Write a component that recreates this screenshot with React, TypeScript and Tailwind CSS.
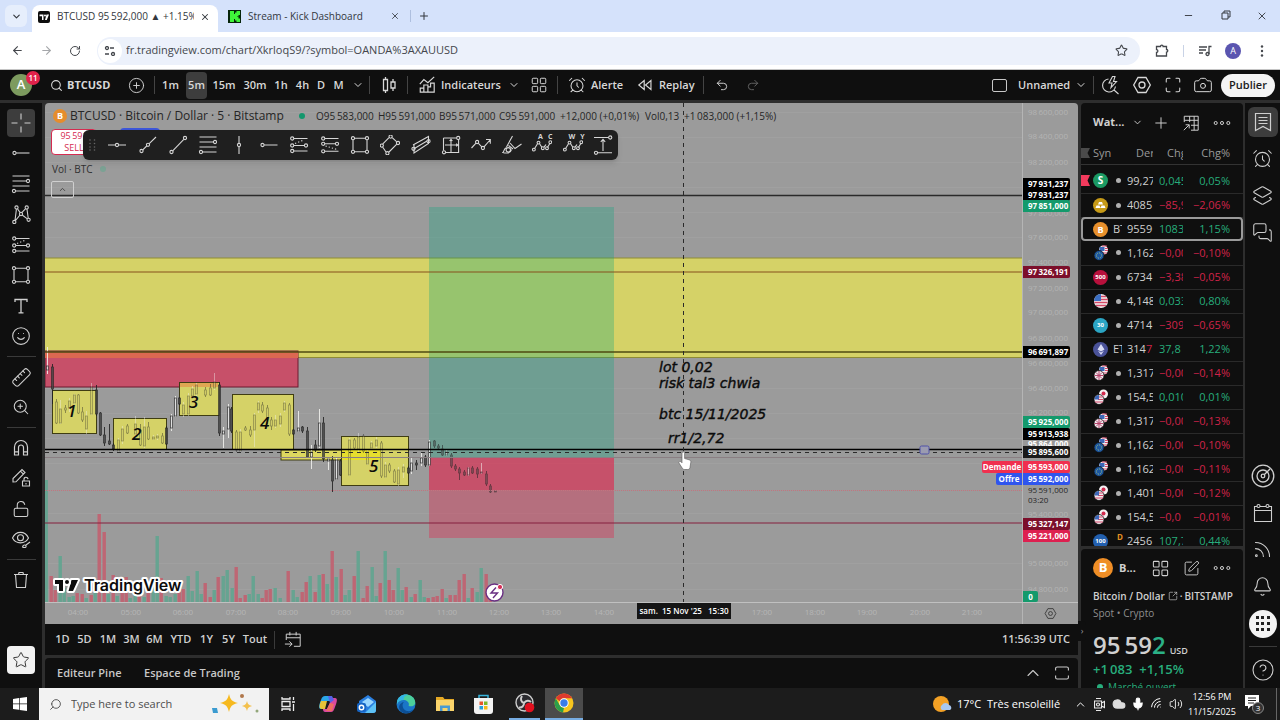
import React from "react";
import {
  AlarmClock,
  ArrowLeft,
  ArrowRight,
  Bell,
  Camera,
  ChevronDown,
  ChevronUp,
  CircleHelp,
  CirclePlus,
  Cloud,
  Layers2,
  LockOpen,
  Maximize,
  MessagesSquare,
  Mic,
  Minus,
  Plus,
  Redo2,
  RotateCw,
  Rss,
  Ruler,
  Search,
  Smile,
  SquareArrowOutUpRight,
  SquarePen,
  Star,
  Undo2,
  Volume2,
  Wifi,
  X,
  ZoomIn,
} from "lucide-react";

type Kids = { children: React.ReactNode };

/* ---------- line icons on a 20 unit grid ---------- */

function Glyph({ children, size = 20 }: Kids & { size?: number }) {
  return (
    <svg width={size} height={size} viewBox="0 0 20 20" fill="none" stroke="currentColor" strokeWidth="1.1" aria-hidden="true" className="shrink-0">
      {children}
    </svg>
  );
}

function Dots({ at, r = 1.6 }: { at: number[][]; r?: number }) {
  return (
    <>
      {at.map(([x, y]) => (
        <circle key={`${x}-${y}`} cx={x} cy={y} r={r} />
      ))}
    </>
  );
}

const CrossIcon = () => (
  <Glyph><path d="M10 .5v6M10 13.5v6M.5 10h6M13.5 10h6" /></Glyph>
);
const HLineIcon = () => (
  <Glyph><path d="M1 10h7.3M11.7 10H19" /><Dots at={[[10, 10]]} /></Glyph>
);
const RayIcon = () => (
  <Glyph><path d="M5.2 10H18.5" /><Dots at={[[3.5, 10]]} /></Glyph>
);
const VLineIcon = () => (
  <Glyph><path d="M10 1v7.3M10 11.7V19" /><Dots at={[[10, 10]]} /></Glyph>
);
const ExtendIcon = () => (
  <Glyph><path d="M4.8 14.8 8.7 11M11.2 8.6 18 2" /><Dots at={[[3.5, 16], [10, 9.8]]} /></Glyph>
);
const TrendIcon = () => (
  <Glyph><path d="M4.7 15.8 15.8 4.3" /><Dots at={[[3.5, 17], [17, 3]]} /></Glyph>
);
const FibIcon = () => (
  <Glyph><path d="M1.5 2H18.5M1.5 7H15.2M1.5 12H18.5M4.7 17H18.5" /><Dots at={[[17, 7], [3, 17]]} /></Glyph>
);
const PatternIcon = () => (
  <Glyph>
    <path d="M4 16.5 5.4 5.2M6.6 5 9 8.4M11 8.3 14.4 4.8M16 5.2 17.2 14M4.2 16.8 9 11M11.2 11 16 14.6" />
    <Dots at={[[5.5, 3.5], [15.7, 3.5], [10, 10], [3.3, 18], [17.6, 15.8]]} />
  </Glyph>
);
const ForecastIcon = () => (
  <Glyph>
    <path d="M4.8 3.5H18.5M4.8 10.5H15.3M4.8 16H18.5" />
    <path d="M6 8.5 15 5" strokeDasharray="1.3 2" />
    <Dots at={[[3.2, 3.5], [3.2, 10.5], [17, 10.5], [3.2, 16]]} />
  </Glyph>
);
const ShortIcon = () => (
  <Glyph>
    <path d="M4.8 3.5H18.5M4.8 8.8H15.3M4.8 16.3H18.5" />
    <path d="M5.5 11 17 14.5" strokeDasharray="1.3 2" />
    <Dots at={[[3.2, 3.5], [3.2, 8.8], [17, 8.8], [3.2, 16.3]]} />
  </Glyph>
);
const RectIcon = () => (
  <Glyph>
    <path d="M4.6 3.2H15.4M4.6 16.8H15.4M3 4.8V15.2M17 4.8V15.2" />
    <Dots at={[[3, 3.2], [17, 3.2], [3, 16.8], [17, 16.8]]} />
  </Glyph>
);
const RotatedIcon = () => (
  <Glyph>
    <path d="M2.6 9.2 9 2.6M12.2 2.6 16.8 6.8M16.8 9.2 9 17M6 17 2.6 12" />
    <Dots at={[[1.8, 10.6], [10.6, 1.6], [7.4, 18.2], [18, 8]]} />
  </Glyph>
);
const ChannelIcon = () => (
  <Glyph>
    <path d="M2 10 17.5 1.5V8.5L3 18V10M3.4 13.5 16 6" />
    <Dots at={[[2.5, 13.8], [17.5, 6.2]]} />
  </Glyph>
);
const RangeIcon = () => (
  <Glyph>
    <path d="M2.5 3H15.4M2.5 3V15.4M4.5 17.5H17.6V4.6M10 4V17M4 10H17M8.6 6 10 4.4 11.4 6M15.2 8.6 16.8 10 15.2 11.4" />
    <Dots at={[[17.2, 3], [3, 17.3]]} />
  </Glyph>
);
const PathIcon = () => (
  <Glyph>
    <path d="M.5 13 5 8.2M7.2 8.2 10.8 11.8M13 11.8 19 5M15 4.5H19.3V8.8" />
    <Dots at={[[6.1, 7], [11.9, 13]]} />
  </Glyph>
);
const BrushIcon = () => (
  <Glyph>
    <path d="M10.5 1 4.5 12M8 8 13 13.5 19.5 9M4.5 12.5C1 14 2.5 17 .8 17.5 4 18.5 8.5 18.5 9.5 14.5M6.5 10.5 11 14" />
    <circle cx="6.3" cy="14.8" r="2.2" />
  </Glyph>
);
const AbcIcon = () => (
  <Glyph>
    <path d="M2.6 13.5 5.5 8.8M7.6 8.8 9.8 12.2M12 12.2 14 9.5M15.4 12.5 18 8.2" />
    <Dots at={[[1.9, 14.6], [6.5, 7.6], [10.8, 13.2], [15, 13.2], [18.3, 7.2]]} r={1.4} />
  </Glyph>
);
const MeasureIcon = () => (
  <Glyph>
    <path d="M1 2.5H15.5M4.7 17.8H19M10 4.5V16M7.8 6.8 10 4.4 12.2 6.8" />
    <Dots at={[[17.2, 2.5], [3, 17.8]]} />
  </Glyph>
);
const TextIcon = () => (
  <Glyph><path d="M4 6V3.5H16V6M10 3.5V16.8M7.5 16.8H12.5" strokeWidth="1.3" /></Glyph>
);
const MagnetIcon = () => (
  <Glyph><path d="M3.5 17V9a6.5 6.5 0 0 1 13 0v8h-4V9.5a2.5 2.5 0 0 0-5 0V17zM3.5 13.8h4M12.5 13.8h4" strokeWidth="1.2" /></Glyph>
);
const CandlesIcon = () => (
  <Glyph><path d="M4.5 4.5h4v11h-4zM12 7h4v6h-4zM6.5 2v2.5M6.5 15.5V18M14 4v3M14 13v3" strokeWidth="1.3" /></Glyph>
);
const IndicatorsIcon = () => (
  <Glyph size={18}><path d="M2 9 6.5 4l4.5 3.5L18 1M2.5 18v-4.5h4V18zM6.5 18V10h4.5v8zM11 12h3V8h4v10h-7" strokeWidth="1.3" /></Glyph>
);
const GridIcon = ({ size = 18 }: { size?: number }) => (
  <Glyph size={size}>
    <rect x="2.5" y="2.5" width="6" height="6" rx="1" /><rect x="11.5" y="2.5" width="6" height="6" rx="1" />
    <rect x="2.5" y="11.5" width="6" height="6" rx="1" /><rect x="11.5" y="11.5" width="6" height="6" rx="1" />
  </Glyph>
);
const RewindIcon = () => (
  <Glyph size={18}><path d="M8 5v10L2 10zM15.5 5v10l-6-5z" strokeWidth="1.3" /></Glyph>
);
const HexIcon = ({ size = 20 }: { size?: number }) => (
  <Glyph size={size}><path d="M6 2.5h8l4.3 7.5-4.3 7.5H6L1.7 10z" strokeWidth="1.3" /><circle cx="10" cy="10" r="3" strokeWidth="1.3" /></Glyph>
);
const QuickSearchIcon = () => (
  <Glyph>
    <path d="M8.5 4A6.5 6.5 0 1 0 15.5 11.5M14 15 18.5 19M12.5 1.5 9 8H12L11 12.5 16.5 6.5H13.5L15 1.5z" strokeWidth="1.1" />
  </Glyph>
);
const PencilLockIcon = () => (
  <Glyph>
    <path d="M2 14V10.5L11 1.5 14 4.5 5 13.8zM9.4 3.2 12.4 6.2" />
    <path d="M11.5 13h7v5h-7zM13 13v-1.5a2 2 0 0 1 4-.4M15 15v1.5" />
  </Glyph>
);
const EyeIcon = () => (
  <Glyph>
    <path d="M1.5 9C5 1.5 14 1.5 17.5 9 14 15.5 5 15.5 1.5 9z" /><circle cx="9.5" cy="8.7" r="3" />
    <path d="M11.5 18c.5-2.5 3-2.5 3.5-1s-1.5 2-3.5 1zM15 16l4-3" />
  </Glyph>
);
const TrashIcon = () => (
  <Glyph><path d="M3 4.5H17M7.5 4.5 8 2.5H12L12.5 4.5M4.5 4.5 5.5 17.5H14.5L15.5 4.5" /></Glyph>
);
const TableAddIcon = () => (
  <Glyph size={18}>
    <path d="M2.5 9V2.5H18V18H10M2.5 7H18M8.5 2.5V9M13.5 2.5V18M10 12.5H18M2 18 8 12M4 12H8V16" />
  </Glyph>
);
const MoreIcon = () => (
  <Glyph size={18}><Dots at={[[3, 10], [10, 10], [17, 10]]} r={1.7} /></Glyph>
);
const ListIcon = () => (
  <Glyph><path d="M2.5 1.5H17.5V18.5L10 14.5 2.5 18.5zM5.5 5.5H14.5M5.5 8.5H14.5M5.5 11.5H14.5" strokeWidth="1.2" /></Glyph>
);
const RadarIcon = () => (
  <Glyph size={24}><circle cx="10" cy="10" r="9" /><circle cx="10" cy="10" r="5" /><circle cx="10" cy="10" r="1.5" /><path d="M11 9 16 4" /></Glyph>
);
const CalIcon = () => (
  <Glyph><path d="M4 3.5H1.5V18.5H18.5V3.5H16M7 3.5H13M1.5 7.5H18.5" /><Dots at={[[5.5, 3], [14.5, 3]]} r={1.5} /></Glyph>
);
const GoToIcon = () => (
  <Glyph size={18}><path d="M2.5 10V3.5H18V17H11M2.5 7.5H18M6.5 1V5M13.5 1V5M1 14.5H9M6 11.5 9 14.5 6 17.5" /></Glyph>
);
const ExpandIcon = () => (
  <Glyph size={16}><path d="M2 7V4.5a2 2 0 0 1 2-2H16a2 2 0 0 1 2 2V7M2 13v2.5a2 2 0 0 0 2 2H16a2 2 0 0 0 2-2V13" strokeWidth="1.4" /></Glyph>
);

/* ---------- browser chrome ---------- */

function TvMark() {
  return (
    <svg width="12" height="12" viewBox="0 0 12 12" aria-hidden="true" className="shrink-0">
      <rect width="12" height="12" rx="2" fill="#0d0d0d" />
      <path d="M1.5 3.5h4V9H4V5.2H1.5zM8.500 3.500H11L8.800 9H7z" fill="#fff" /><circle cx="7" cy="4.5" r="1" fill="#fff" />
    </svg>
  );
}

function BrowserTabs() {
  return (
    <div className="flex h-8 shrink-0 items-center bg-[#d5e2fb] text-[10px] text-[#33373d]">
      <button aria-label="Rechercher dans les onglets" className="ml-[5px] flex h-[22px] w-[22px] items-center justify-center rounded-md bg-[#e6eefc]">
        <ChevronDown size={11} strokeWidth={2.5} />
      </button>
      <div className="ml-[5px] mt-[5px] flex h-[27px] w-[186px] items-center rounded-t-lg bg-white pb-[4px] pl-[6px] pr-2">
        <TvMark />
        <span className="ml-[7px] w-[137px] overflow-hidden whitespace-nowrap">BTCUSD 95{"\u2009"}592,000 ▲ +1.15% U</span>
        <button aria-label="Fermer l'onglet" className="ml-auto"><X size={10} strokeWidth={2.5} /></button>
      </div>
      <div className="flex h-full w-[191px] items-center pl-[10px] pr-[9px]">
        <svg width="13" height="13" viewBox="0 0 13 13" aria-hidden="true">
          <rect width="13" height="13" fill="#06240a" /><path d="M2 1h4v3h1V2.500h1.500V1H12v4h-1.500v1.500H9V7h1.500v1.500H12V12H8.500v-1.500H7V9H6v3H2z" fill="#3ff43a" />
        </svg>
        <span className="ml-[7px]">Stream - Kick Dashboard</span>
        <button aria-label="Fermer l'onglet" className="ml-auto"><X size={10} strokeWidth={2} /></button>
      </div>
      <button aria-label="Nouvel onglet" className="ml-[1px] flex w-[26px] justify-center border-l border-[#aebfdf]"><Plus size={12} strokeWidth={2} /></button>
      <div className="ml-auto flex">
        <button aria-label="Réduire" className="flex w-[37px] justify-center"><Minus size={11} strokeWidth={2} /></button>
        <button aria-label="Restaurer" className="flex w-[37px] justify-center">
          <svg width="10" height="10" viewBox="0 0 10 10" fill="none" stroke="currentColor"><path d="M1 3h6v6H1zM3 3V1h6v6H7" /></svg>
        </button>
        <button aria-label="Fermer" className="flex w-[36px] justify-center"><X size={12} strokeWidth={1.8} /></button>
      </div>
    </div>
  );
}

function AddressBar() {
  return (
    <div className="flex h-[38px] shrink-0 items-center border-b border-[#c4c4c4] bg-white text-[#44474c]">
      <button aria-label="Retour" className="ml-[3px] flex w-[29px] justify-center"><ArrowLeft size={13} /></button>
      <button aria-label="Avancer" className="flex w-[28px] justify-center text-[#a5a7aa]"><ArrowRight size={13} /></button>
      <button aria-label="Actualiser" className="flex w-[30px] justify-center"><RotateCw size={12} /></button>
      <div className="ml-[7px] flex h-[28px] flex-1 items-center rounded-full bg-[#ecf1fb] pl-[1px] pr-[12px]">
        <span className="flex h-[24px] w-[24px] items-center justify-center rounded-full bg-white">
          <svg width="12" height="10" viewBox="0 0 12 10" fill="none" stroke="currentColor" strokeWidth="1.3" aria-hidden="true"><circle cx="3" cy="2" r="1.500" /><path d="M6 2h4M1 8h4" /><circle cx="9" cy="8" r="1.500" /></svg>
        </span>
        <input aria-label="Adresse" defaultValue="fr.tradingview.com/chart/XkrloqS9/?symbol=OANDA%3AXAUUSD" className="ml-[4px] flex-1 bg-transparent text-[11px] outline-none" />
        <button aria-label="Favori"><Star size={13} /></button>
      </div>
      <button aria-label="Extensions" className="ml-[14px] flex w-[16px] justify-center">
        <svg width="14" height="13" viewBox="0 0 14 13" fill="none" stroke="currentColor" strokeWidth="1.3" aria-hidden="true"><path d="M1.500 2.500H5.500a1.300 1.300 0 0 1 2.600 0H11.500V5.500a1.300 1.300 0 0 1 0 2.600V12H1.500V8.500a1.400 1.400 0 0 0 0-2.800z" /></svg>
      </button>
      <span className="ml-[13px] h-3 w-px bg-[#c9d3e6]" />
      <button aria-label="Multimédia" className="ml-[14px]">
        <svg width="14" height="12" viewBox="0 0 14 12" fill="none" stroke="currentColor" strokeWidth="1.3"><path d="M1 2h8M1 5h7M1 8h4M11 9V1.500h2.500" /><circle cx="9.500" cy="9" r="1.500" /></svg>
      </button>
      <span className="ml-[13px] flex h-4 w-4 items-center justify-center rounded-full bg-[#5a55b0] text-[9px] text-white">A</span>
      <button aria-label="Menu" className="ml-[12px] mr-[10px] flex w-[17px] justify-center">
        <svg width="4" height="12" viewBox="0 0 4 12" fill="currentColor"><circle cx="2" cy="1.500" r="1.200" /><circle cx="2" cy="6" r="1.200" /><circle cx="2" cy="10.500" r="1.200" /></svg>
      </button>
    </div>
  );
}

/* ---------- application header ---------- */

const Sep = () => <span className="h-[18px] w-px shrink-0 bg-[#444]" />;

function Tool({ label, width, children }: Kids & { label: string; width: string }) {
  return (
    <button aria-label={label} className={`flex shrink-0 items-center justify-center ${width}`}>
      {children}
    </button>
  );
}

const INTERVALS: [string, string][] = [
  ["1m", "w-[31px]"], ["5m", "w-[21px] h-[27px] rounded bg-[#3d3d3d]"], ["15m", "w-[34px]"], ["30m", "w-[28px]"],
  ["1h", "w-[24px]"], ["4h", "w-[19px]"], ["D", "w-[18px]"], ["M", "w-[17px]"],
];

function Header() {
  return (
    <header className="flex h-[30px] shrink-0 items-center bg-[#0f0f0f] text-[11px] font-semibold text-[#d8d8d8]">
      <div className="relative flex w-[42px] shrink-0 justify-center">
        <span className="flex h-[22px] w-[22px] items-center justify-center rounded-full bg-[#7d9b5f] text-[13px] text-white">A</span>
        <span className="absolute -top-[3px] left-[26px] flex h-[14px] w-[14px] items-center justify-center rounded-full bg-[#e0224a] text-[8px] text-white">11</span>
      </div>
      <button className="ml-2 flex w-[68px] shrink-0 items-center gap-[4px]"><Search size={13} strokeWidth={2} /><span className="font-bold">BTCUSD</span></button>
      <Tool label="Comparer" width="w-[36px]"><CirclePlus size={17} strokeWidth={1.3} /></Tool>
      <Sep />
      {INTERVALS.map(([t, w]) => (
        <button key={t} className={`shrink-0 text-center ${w}`}>{t}</button>
      ))}
      <Tool label="Intervalles" width="w-[22px]"><ChevronDown size={12} strokeWidth={2} /></Tool>
      <Sep />
      <Tool label="Bougies" width="w-[37px]"><CandlesIcon /></Tool>
      <Sep />
      <button className="ml-[10px] flex w-[82px] shrink-0 items-center gap-[5px]"><IndicatorsIcon />Indicateurs</button>
      <Tool label="Modèles" width="w-[28px]"><ChevronDown size={12} strokeWidth={2} /></Tool>
      <Tool label="Dispositions" width="w-[22px]"><GridIcon /></Tool>
      <span className="w-[7px]" />
      <Sep />
      <button className="ml-[10px] flex w-[69px] shrink-0 items-center gap-[5px]"><AlarmClock size={18} strokeWidth={1.4} />Alerte</button>
      <button className="flex w-[66px] shrink-0 items-center gap-[4px]"><RewindIcon />Replay</button>
      <Sep />
      <Tool label="Annuler" width="w-[36px]"><Undo2 size={14} strokeWidth={1.6} /></Tool>
      <Tool label="Rétablir" width="w-[26px]"><Redo2 size={14} strokeWidth={1.6} className="text-[#666]" /></Tool>
      <div className="ml-auto flex items-center">
        <Tool label="Configuration" width="w-[28px]"><span className="h-[13px] w-[15px] rounded-xs border border-[#c8c8c8]" /></Tool>
        <button className="ml-[5px] w-[51px] text-left">Unnamed</button>
        <Tool label="Gérer" width="w-[24px]"><ChevronDown size={12} strokeWidth={2} /></Tool>
        <Sep />
        <Tool label="Recherche rapide" width="w-[32px]"><QuickSearchIcon /></Tool>
        <Tool label="Réglages" width="w-[31px]"><HexIcon /></Tool>
        <Tool label="Plein écran" width="w-[31px]"><Maximize size={18} strokeWidth={1.4} /></Tool>
        <Tool label="Capture" width="w-[30px]"><Camera size={20} strokeWidth={1.2} /></Tool>
        <button className="ml-[3px] mr-[5px] h-[23px] w-[54px] rounded-full bg-[#f4f4f4] text-[#1a1a1a]">Publier</button>
      </div>
    </header>
  );
}

/* ---------- left drawing rail ---------- */

function RailButton({ label, active, children }: Kids & { label: string; active?: boolean }) {
  return (
    <button aria-label={label} className={`flex h-[28px] w-[28px] items-center justify-center rounded ${active ? "bg-[#3d3d3d]" : ""}`}>
      {children}
    </button>
  );
}

const RailRule = () => <span className="my-[6px] h-px w-[29px] bg-[#3a3a3a]" />;

function LeftRail() {
  return (
    <aside className="mr-[3px] flex w-[42px] shrink-0 flex-col items-center bg-[#0f0f0f] py-[6px] text-[#d0d0d0]">
      <div className="flex h-[241px] flex-col justify-between">
        <RailButton label="Croix" active><CrossIcon /></RailButton>
        <RailButton label="Lignes"><RayIcon /></RailButton>
        <RailButton label="Fibonacci"><FibIcon /></RailButton>
        <RailButton label="Motifs"><PatternIcon /></RailButton>
        <RailButton label="Prévision"><ForecastIcon /></RailButton>
        <RailButton label="Formes"><RectIcon /></RailButton>
        <RailButton label="Texte"><TextIcon /></RailButton>
        <RailButton label="Icônes"><Smile size={20} strokeWidth={1.3} /></RailButton>
      </div>
      <RailRule />
      <div className="flex h-[58px] flex-col justify-between">
        <RailButton label="Mesure"><Ruler size={21} strokeWidth={1.2} className="-scale-x-100" /></RailButton>
        <RailButton label="Zoom"><ZoomIn size={18} strokeWidth={1.4} /></RailButton>
      </div>
      <RailRule />
      <div className="flex h-[119px] flex-col justify-between">
        <RailButton label="Aimant"><MagnetIcon /></RailButton>
        <RailButton label="Mode dessin"><PencilLockIcon /></RailButton>
        <RailButton label="Verrouiller"><LockOpen size={18} strokeWidth={1.4} /></RailButton>
        <RailButton label="Masquer"><EyeIcon /></RailButton>
      </div>
      <RailRule />
      <RailButton label="Supprimer"><TrashIcon /></RailButton>
      <button aria-label="Barre de favoris" className="mb-[8px] mt-auto flex h-[28px] w-[28px] items-center justify-center rounded bg-[#f2f2f2] text-[#333]">
        <Star size={18} strokeWidth={1.3} />
      </button>
    </aside>
  );
}

/* ---------- chart ---------- */

// x, high, low, body top, body bottom, rising
type Candle = [number, number, number, number, number, boolean];
const CANDLES: Candle[] = [
  [47, 347, 374, 366, 370, true], [52, 364, 404, 367, 389, false], [56, 399, 424, 402, 423, false], [60, 400, 424, 409, 423, true],
  [65, 405, 413, 408, 410, false], [69, 398, 412, 401, 408, true], [74, 394, 404, 395, 403, true], [78, 394, 414, 395, 413, false],
  [82, 407, 422, 412, 420, false], [86, 411, 434, 416, 429, true], [91, 383, 415, 387, 414, true], [96, 385, 416, 390, 414, false],
  [100, 412, 436, 413, 435, false], [104, 427, 446, 435, 443, false], [109, 424, 445, 441, 444, false], [113, 443, 451, 445, 449, false],
  [118, 438, 452, 440, 451, true], [122, 426, 444, 429, 441, true], [127, 424, 434, 426, 433, false], [135, 416, 438, 424, 434, true],
  [140, 424, 446, 430, 445, false], [144, 417, 448, 427, 446, true], [148, 422, 440, 427, 439, false], [153, 435, 440, 437, 439, true],
  [157, 434, 440, 436, 438, true], [162, 433, 444, 436, 443, false], [166, 426, 445, 428, 444, false], [171, 414, 431, 416, 428, true],
  [175, 396, 417, 398, 416, true], [179, 397, 405, 398, 404, false], [183, 402, 417, 405, 414, true], [188, 393, 416, 396, 414, true],
  [192, 386, 398, 389, 396, true], [196, 383, 397, 385, 394, true], [205, 387, 397, 390, 395, false], [210, 384, 396, 388, 395, false],
  [214, 373, 390, 382, 388, true], [219, 382, 436, 385, 433, false], [223, 427, 448, 431, 434, true], [228, 404, 438, 407, 429, true],
  [231, 407, 433, 409, 431, false], [236, 430, 452, 432, 450, false], [240, 429, 453, 432, 451, true], [245, 426, 431, 428, 430, false],
  [250, 426, 437, 430, 435, false], [254, 413, 447, 415, 430, true], [258, 401, 413, 403, 410, true], [262, 402, 413, 405, 411, false],
  [267, 405, 424, 408, 418, false], [271, 417, 430, 420, 426, false], [275, 415, 428, 420, 426, true], [280, 413, 427, 416, 424, true],
  [284, 401, 412, 403, 410, true], [289, 403, 436, 405, 434, false], [293, 429, 435, 430, 434, false], [298, 411, 432, 428, 431, true],
  [302, 426, 433, 427, 431, false], [307, 427, 458, 431, 457, false], [311, 445, 469, 452, 457, true], [315, 440, 452, 445, 450, false],
  [319, 409, 448, 423, 446, true], [323, 417, 462, 423, 459, false], [328, 458, 470, 459, 461, true], [332, 456, 492, 460, 481, false],
  [336, 457, 480, 460, 479, true], [340, 459, 476, 461, 475, false], [349, 438, 476, 440, 475, true], [354, 438, 450, 440, 448, false],
  [358, 433, 453, 437, 449, true], [363, 434, 453, 436, 451, false], [367, 450, 465, 452, 464, true], [371, 441, 450, 443, 448, true],
  [376, 437, 448, 440, 446, true], [381, 441, 478, 443, 476, false], [385, 462, 478, 465, 477, true], [389, 463, 473, 465, 471, false],
  [394, 469, 483, 471, 482, false], [398, 467, 486, 470, 484, true], [403, 464, 478, 467, 472, true], [408, 466, 474, 468, 473, false],
  [411, 457, 474, 463, 471, true], [416, 460, 470, 463, 465, false], [421, 453, 466, 458, 463, true], [425, 455, 467, 457, 465, false],
  [429, 440, 466, 442, 465, true], [434, 440, 448, 441, 446, false], [438, 444, 450, 446, 448, false], [442, 445, 456, 449, 455, false],
  [446, 449, 456, 452, 455, true], [451, 453, 468, 455, 466, false], [455, 464, 471, 466, 469, false], [459, 467, 480, 469, 473, false],
  [464, 470, 476, 472, 475, false], [468, 467, 476, 468, 475, true], [472, 466, 474, 468, 473, false], [477, 467, 478, 469, 474, false],
  [481, 463, 474, 472, 473, true], [486, 471, 486, 474, 484, false], [490, 484, 493, 486, 492, false], [495, 490, 492, 491, 492, false],
];

// x, height, rising
const VOLUMES: [number, number, boolean][] = [
  [46, 122, true], [51, 26, false], [55, 12, false], [60, 46, true], [64, 14, true], [69, 5, true], [73, 6, true], [77, 9, false],
  [82, 8, false], [86, 4, true], [91, 7, false], [95, 14, true], [99, 88, false], [104, 70, false], [108, 8, true], [113, 27, false],
  [117, 6, true], [122, 9, false], [126, 25, false], [130, 4, true], [135, 8, true], [139, 7, false], [144, 5, true], [148, 12, false],
  [153, 18, true], [157, 66, true], [161, 24, false], [166, 6, true], [170, 5, true], [175, 8, true], [179, 10, false], [183, 13, false],
  [188, 26, true], [192, 11, true], [197, 31, true], [201, 8, true], [205, 19, false], [210, 5, false], [214, 12, true], [218, 25, false],
  [223, 26, true], [227, 32, true], [232, 14, true], [236, 35, false], [240, 4, false], [245, 7, false], [249, 8, true], [253, 26, true],
  [258, 8, true], [262, 4, false], [266, 12, false], [270, 13, false], [275, 14, true], [280, 4, true], [288, 31, false], [293, 12, true],
  [297, 5, true], [302, 10, false], [306, 20, false], [310, 26, true], [315, 10, false], [319, 27, true], [323, 28, false], [327, 18, true],
  [332, 51, false], [336, 25, true], [341, 33, false], [345, 7, true], [349, 12, true], [354, 26, false], [358, 51, true], [363, 4, false],
  [367, 16, false], [372, 35, true], [376, 6, true], [380, 19, false], [385, 51, true], [389, 22, false], [393, 12, false], [398, 34, true],
  [402, 12, true], [406, 15, false], [411, 5, true], [415, 8, false], [420, 22, true], [424, 5, true], [428, 4, false], [433, 5, false],
  [437, 6, false], [442, 13, false], [446, 4, true], [450, 7, false], [455, 7, false], [459, 22, false], [464, 28, false], [468, 4, true],
  [472, 14, false], [477, 10, true], [481, 34, true], [486, 28, false], [490, 8, false],
];

const BOXES: [number, number, number, number, string, number, number][] = [
  [52, 390, 44, 43, "1", 67, 417], [113, 418, 53, 31, "2", 132, 440], [179, 382, 40, 33, "3", 189, 408],
  [232, 394, 61, 55, "4", 260, 429], [341, 436, 67, 49, "5", 369, 472],
];

function Plot() {
  return (
    <svg viewBox="45 103 977 499" preserveAspectRatio="xMinYMin slice" className="absolute inset-0 h-full w-full" role="img" aria-label="Graphique BTCUSD">
      <g stroke="#a5a5a5">
        {[112, 137, 162, 187, 212, 237, 388, 413, 438, 463, 513, 563, 589].map((y) => (
          <line key={y} x1="45" x2="1022" y1={y + 0.5} y2={y + 0.5} strokeOpacity="0.5" />
        ))}
      </g>
      <g>
        {VOLUMES.map(([x, h, up]) => (
          <rect key={x} x={x - 1.5} y={602 - h} width="3.4" height={h} fill={up ? "#66a491" : "#be6674"} />
        ))}
      </g>
      <rect x="45" y="258" width="977" height="100" fill="#d5d267" />
      <path d="M45 258H1022M45 357.5H1022" stroke="#8f8c35" />
      <rect x="45" y="351" width="253" height="36" fill="#c75069" stroke="#6d1a30" />
      <rect x="45" y="352" width="253" height="6" fill="#dd6851" />
      <rect x="281" y="450" width="100" height="10" fill="#ddd75f" stroke="#3f3d12" />
      {BOXES.map(([x, y, w, h, t]) => (
        <rect key={t} x={x + 0.5} y={y + 0.5} width={w} height={h} fill="#d5d267" stroke="#3f3d12" />
      ))}
      <rect x="342" y="450" width="39" height="10" fill="#e6de2e" />
      <rect x="180" y="383" width="38" height="4" fill="#dfa652" />
      <rect x="429" y="207" width="185" height="250" fill="#0aa77d" fillOpacity="0.3" />
      <rect x="429" y="457" width="185" height="81" fill="#d83355" fillOpacity="0.42" />
      <rect x="429" y="457" width="185" height="33" fill="#d83355" fillOpacity="0.5" />
      {CANDLES.map(([x, hi, lo, top, bottom, up]) => {
        const boxed = BOXES.some(([bx, by, bw, bh]) => x > bx + 1 && x < bx + bw - 1 && top >= by - 4 && bottom <= by + bh + 4);
        return (
          <g key={x} opacity={boxed ? 0.42 : x > 430 ? 0.55 : 0.85}>
            <line x1={x + 0.5} x2={x + 0.5} y1={hi} y2={lo} stroke={up ? "#f3f3ef" : "#222"} />
            <rect x={x - 0.5} y={top} width="2" height={bottom - top} fill={boxed ? "#c9c66b" : up ? "#ececec" : "#444"} stroke="#222" strokeWidth="0.7" />
          </g>
        );
      })}
      <path d="M45 195.5H1022" stroke="#2a2a2a" strokeWidth="1.5" />
      <path d="M45 272H1022" stroke="#86501c" />
      <path d="M45 352H1022" stroke="#4e4a10" strokeWidth="1.6" />
      <path d="M45 457.5H1022" stroke="#8a7f83" />
      <path d="M45 490.5H1022" stroke="#c4737f" strokeDasharray="1 1" />
      <path d="M45 523H1022" stroke="#86203f" strokeWidth="1.2" />
      <path d="M45 449.5H1022" stroke="#000" strokeWidth="1.5" />
      <path d="M45 452.5H1022" stroke="#2a2a2a" strokeDasharray="4 4" />
      <path d="M683.5 103V602" stroke="#2a2a2a" strokeDasharray="4 4" />
      <rect x="920" y="446" width="9" height="8" rx="1.5" fill="#9b9bb0" stroke="#4f50a8" />
      <g fontFamily="'Open Sans', sans-serif" fontStyle="italic" fontWeight="600" fill="#0b0b0b" fontSize="17">
        {BOXES.map(([, , , , t, x, y]) => (
          <text key={t} x={x} y={y}>{t}</text>
        ))}
      </g>
      <g fontFamily="'DejaVu Sans', 'Open Sans', sans-serif" fontStyle="italic" fontWeight="400" fill="#0b0b0b" stroke="#0b0b0b" strokeWidth="0.4" fontSize="14">
        <text x="659" y="372">lot 0,02</text>
        <text x="659" y="388">risk tal3 chwia</text>
        <text x="659" y="419">btc 15/11/2025</text>
        <text x="668" y="443">rr1/2,72</text>
      </g>
      <g stroke="#fff" strokeWidth="4" strokeLinejoin="round" fill="#0c0c0c">
        <path d="M55 580H63V591H59V584H55zM71.5 580H78L73 591H68.5z" style={{ paintOrder: "stroke" }} />
        <circle cx="67" cy="582" r="2" style={{ paintOrder: "stroke" }} />
        <text x="84" y="591" fontFamily="Inter, sans-serif" fontWeight="600" fontSize="16" style={{ paintOrder: "stroke" }}>TradingView</text>
      </g>
      <circle cx="494.5" cy="592.5" r="8.5" fill="#fff" stroke="#6a2f83" strokeWidth="1.4" />
      <path d="M496 587.5 491 593H497.5L493 598" fill="none" stroke="#6a2f83" strokeWidth="1.4" />
      <circle cx="500" cy="587" r="2.6" fill="#d42d57" stroke="#fff" />
      <path d="M682 453.5c0-2 2.600-2 2.600 0v5l4.600 1.300c1.300.4 1.800 1.200 1.600 2.500l-.8 5.200c-.3 1.300-1 2-2.300 2h-3c-1.200 0-1.900-.5-2.500-1.500l-3.200-5c-.7-1.400 1-2.200 2-1.200l1 1z" fill="#fff" stroke="#555" strokeWidth="0.6" />
    </svg>
  );
}

const TOOLS: [string, () => React.ReactElement][] = [
  ["Ligne horizontale", HLineIcon], ["Ligne étendue", ExtendIcon], ["Ligne de tendance", TrendIcon], ["Retracement", FibIcon],
  ["Ligne verticale", VLineIcon], ["Rayon horizontal", RayIcon], ["Position longue", ForecastIcon], ["Position courte", ShortIcon],
  ["Rectangle", RectIcon], ["Rectangle pivoté", RotatedIcon], ["Canal parallèle", ChannelIcon], ["Plage date et prix", RangeIcon],
  ["Chemin", PathIcon], ["Pinceau", BrushIcon],
];

function FloatingTools() {
  return (
    <div className="absolute left-[38px] top-[27px] flex h-[30px] w-[535px] items-center rounded-md bg-[#1f1f1f] pl-[6px] text-[#d6d6d6] shadow-md">
      <svg width="7" height="12" viewBox="0 0 7 12" fill="#666" aria-hidden="true">
        {[1, 4.5, 8, 11].map((y) => (<g key={y}><circle cx="1" cy={y} r="0.8" /><circle cx="5.5" cy={y} r="0.8" /></g>))}
      </svg>
      <div className="ml-[6px] flex flex-1">
        {TOOLS.map(([label, I]) => (
          <button key={label} aria-label={label} className="flex flex-1 items-center justify-center"><I /></button>
        ))}
        {["A C", "W Y"].map((t) => (
          <button key={t} className="relative flex flex-1 items-center justify-center">
            <AbcIcon />
            <span className="absolute -top-[2px] left-[11px] flex gap-[5px] text-[7px] font-bold leading-none">
              <span>{t[0]}</span><span>{t[2]}</span>
            </span>
          </button>
        ))}
        <button aria-label="Fourchette de prix" className="flex flex-1 items-center justify-center"><MeasureIcon /></button>
      </div>
    </div>
  );
}

function Legend() {
  return (
    <>
      <div className="absolute left-2 top-[4px] flex h-[18px] items-center whitespace-nowrap text-[#262626]">
        <span className="flex h-[14px] w-[14px] items-center justify-center rounded-full bg-[#e58d2d] text-[9px] font-bold text-white">B</span>
        <span className="ml-[3px] w-[229px] text-[12px]">BTCUSD · Bitcoin / Dollar · 5 · Bitstamp</span>
        <span className="h-[6px] w-[6px] rounded-full bg-[#13976d]" />
        <div className="ml-[11px] flex text-[10px]">
          <span className="w-[62px]">O95{"\u2009"}583,000</span>
          <span className="w-[61px]">H95{"\u2009"}591,000</span>
          <span className="w-[60px]">B95{"\u2009"}571,000</span>
          <span className="w-[61px]">C95{"\u2009"}591,000</span>
          <span className="w-[85px]">+12,000 (+0,01%)</span>
          <span className="w-[39px]">Vol0,13</span>
          <span>+1{"\u2009"}083,000 (+1,15%)</span>
        </div>
      </div>
      <button className="absolute left-[6px] top-[26px] flex h-[26px] w-[46px] flex-col items-center justify-center rounded border border-[#d52b50] bg-white text-[9px] leading-[12px] text-[#d52b50]">
        <span>95{"\u2009"}591</span>
        <span>SELL</span>
      </button>
      <span className="absolute left-[75px] top-[25px] h-[4px] w-[40px] rounded-t bg-[#3d56d8]" />
      <div className="absolute left-[7px] top-[58px] flex h-4 items-center gap-[7px] text-[10px] text-[#303030]">
        Vol · BTC<span className="h-[6px] w-[6px] rounded-full bg-[#7ba294]" />
      </div>
      <button aria-label="Réduire la légende" className="absolute left-[6px] top-[78px] flex h-[17px] w-[23px] items-center justify-center rounded-xs border border-[#cfcfcf] text-[#333]">
        <ChevronUp size={9} strokeWidth={2} />
      </button>
    </>
  );
}

const thin = (t: string) => t.replace(" ", "\u2009");

const FAINT: [number, string][] = [
  [9, "98 600,000"], [33, "98 400,000"], [59, "98 200,000"], [110, "97 800,000"], [134, "97 600,000"], [159, "97 400,000"], [185, "97 200,000"],
  [209, "97 000,000"], [235, "96 800,000"], [260, "96 600,000"], [285, "96 400,000"], [309, "96 200,000"], [411, "95 400,000"], [460, "95 000,000"], [486, "94 800,000"],
];
const PRICES: [number, string, string][] = [
  [341, "95 864,000", "bg-[#999] text-white"], [81, "97 931,237", "bg-black text-white"], [92, "97 931,237", "bg-black text-white"], [103, "97 851,000", "bg-[#149a6c] text-white"],
  [169, "97 326,191", "bg-[#7c0f2b] text-white"], [249, "96 691,897", "bg-black text-white"], [319, "95 925,000", "bg-[#149a6c] text-white"],
  [331, "95 913,938", "bg-black text-white"], [349, "95 895,600", "bg-[#1a1a1a] text-white"], [364, "95 593,000", "bg-[#f0304f] text-white"],
  [376, "95 592,000", "bg-[#2f55ee] text-white"], [421, "95 327,147", "bg-[#7c0f2b] text-white"], [433, "95 221,000", "bg-[#dd2050] text-white"],
];
const HOURS: [number, string][] = [
  [78, "04:00"], [131, "05:00"], [183, "06:00"], [236, "07:00"], [288, "08:00"], [341, "09:00"], [394, "10:00"], [447, "11:00"],
  [499, "12:00"], [551, "13:00"], [604, "14:00"], [762, "17:00"], [815, "18:00"], [867, "19:00"], [920, "20:00"], [972, "21:00"],
];

function PriceAxis() {
  return (
    <div className="relative w-[56px] shrink-0 overflow-hidden border-l border-[#b5b5b5] text-[8px]">
      {FAINT.map(([y, t]) => (
        <span key={t} className="absolute left-[5px] h-[12px] -translate-y-1/2 whitespace-nowrap leading-[12px] text-[#b4b4b4]" style={{ top: y }}>{thin(t)}</span>
      ))}
      {PRICES.map(([y, t, c], i) => (
        <span key={i} className={`absolute left-0 h-[12px] w-[47px] -translate-y-1/2 whitespace-nowrap rounded-r-xs pl-[5px] font-bold leading-[12px] ${c}`} style={{ top: y }}>{thin(t)}</span>
      ))}
      <span className="absolute left-[5px] top-[382px] leading-[10px] text-[#262626]">95{"\u2009"}591,000<br />03:20</span>
      <span className="absolute left-0 top-[488px] h-[11px] w-[15px] rounded-r-xs bg-[#149a6c] text-center font-bold leading-[11px] text-white">0</span>
    </div>
  );
}

function Chart() {
  return (
    <section className="flex min-h-0 flex-1 flex-col overflow-hidden rounded-t bg-[#9b9b9b]">
      <div className="flex min-h-0 flex-1">
        <div className="relative min-w-0 flex-1 overflow-hidden">
          <Plot />
          <Legend />
          <FloatingTools />
          <span className="absolute right-0 top-[358px] h-[12px] w-[40px] rounded-l-xs bg-[#f0304f] text-center text-[8px] font-bold leading-[12px] text-white">Demande</span>
          <span className="absolute right-0 top-[370px] h-[12px] w-[26px] rounded-l-xs bg-[#2f55ee] text-center text-[8px] font-bold leading-[12px] text-white">Offre</span>
        </div>
        <PriceAxis />
      </div>
      <div className="flex h-[22px] shrink-0 border-t border-[#c0c0c0] text-[8px]">
        <div className="relative flex-1">
          {HOURS.map(([x, t]) => (
            <span key={t} className="absolute top-[3px] w-[30px] text-center leading-[12px] text-[#b6b6b6]" style={{ left: x - 60 }}>{t}</span>
          ))}
          <span className="absolute left-[592px] top-0 h-4 w-[94px] whitespace-pre bg-[#151515] text-center font-semibold leading-4 text-white">{"sam.  15 Nov '25   15:30"}</span>
        </div>
        <button aria-label="Réglages de l'échelle" className="flex w-[56px] items-center justify-center border-l border-[#b5b5b5] text-[#333]"><HexIcon size={13} /></button>
      </div>
    </section>
  );
}

const RANGES: [string, string][] = [
  ["1D", "w-[21px]"], ["5D", "w-[23px]"], ["1M", "w-[24px]"], ["3M", "w-[23px]"], ["6M", "w-[23px]"],
  ["YTD", "w-[30px]"], ["1Y", "w-[21px]"], ["5Y", "w-[23px]"], ["Tout", "w-[30px]"],
];

function BottomBars() {
  return (
    <>
      <div className="flex h-[31px] shrink-0 items-center bg-[#0f0f0f] pl-[7px] pr-2 text-[11px] font-semibold text-[#d0d0d0]">
        {RANGES.map(([t, w]) => (
          <button key={t} className={`shrink-0 text-center ${w}`}>{t}</button>
        ))}
        <span className="ml-[4px] h-[18px] w-px bg-[#3a3a3a]" />
        <button aria-label="Aller à la date" className="ml-[9px]"><GoToIcon /></button>
        <span className="ml-auto">11:56:39 UTC</span>
      </div>
      <div className="mt-[3px] flex h-[30px] shrink-0 items-center rounded-t bg-[#0f0f0f] pl-[12px] pr-[8px] text-[11px] font-semibold text-[#c8c8c8]">
        <button className="w-[87px] text-left">Editeur Pine</button>
        <button>Espace de Trading</button>
        <button aria-label="Ouvrir le panneau" className="ml-auto"><ChevronUp size={20} strokeWidth={1.3} /></button>
        <button aria-label="Agrandir" className="ml-[11px]"><ExpandIcon /></button>
      </div>
    </>
  );
}

/* ---------- watchlist ---------- */

function Coin({ kind }: { kind: string }) {
  if (kind.startsWith("pair-")) {
    const k = kind.slice(5);
    const jp = k === "jp";
    return (
      <svg width="16" height="16" viewBox="0 0 16 16" aria-hidden="true">
        <circle cx="10.5" cy="5" r="4.5" fill="#f4f0f2" />
        {jp ? <circle cx="10.5" cy="4.5" r="2" fill="#d22a4e" /> : <><path d="M9 1h5M12 3.500h3M12 5.500h3M9 8h5" stroke="#d2496a" /><rect x="6.5" y="2" width="5" height="4" fill="#3c67b8" /></>}
        <circle cx="6" cy="10.5" r="5" fill={k === "eu" ? "#1d57a0" : "#f0e8ec"} stroke="#0f0f0f" strokeWidth="0.8" />
        {k === "eu" && <circle cx="6" cy="10.5" r="2.6" fill="none" stroke="#9fbf7f" strokeDasharray="1 1" />}
        {k === "gb" && <path d="M6 6v9M1.500 10.500h9M3 7.500l6 6M9 7.500l-6 6" stroke="#b6436b" />}
        {jp && <><path d="M5 8h5M5 10.500h5.500M2 13h8" stroke="#d2496a" /><path d="M1.500 10.500a4.500 4.500 0 0 1 4.500-4.500v4.500z" fill="#3c67b8" /></>}
      </svg>
    );
  }
  if (kind === "us") {
    return (
      <svg width="16" height="16" viewBox="0 0 16 16" aria-hidden="true">
        <circle cx="8" cy="8" r="7" fill="#f4f0f2" /><path d="M8 3.500h5M8 6.500h7M1.500 9.500h13M3 12.500h10" stroke="#d64866" strokeWidth="1.4" /><path d="M1 8A7 7 0 0 1 8 1v7z" fill="#3b6fc4" />
      </svg>
    );
  }
  const flat: Record<string, [string, string]> = {
    S: ["bg-[#1b9a63]", "text-[10px]"], gold: ["bg-[#c69a17]", ""], B: ["bg-[#e8902c]", "text-[9px]"], "500": ["bg-[#b8103c]", "text-[6px]"],
    "30": ["bg-[#2ba5c4]", "text-[6px]"], eth: ["bg-[#4a5299]", ""], "100": ["bg-[#225fae]", "text-[6px]"],
  };
  const [bg, size] = flat[kind];
  return (
    <span className={`flex h-[15px] w-[15px] items-center justify-center rounded-full font-bold text-white ${bg} ${size}`}>
      {kind === "gold" ? <svg width="11" height="8" viewBox="0 0 11 8" fill="#fff"><path d="M4 1h3l1 2.500H3zM1.500 4.500h3l1 2.500H.5zM6.500 4.500h3l1 2.500h-5z" /></svg>
        : kind === "eth" ? <svg width="8" height="11" viewBox="0 0 8 11" fill="#d9dcf5"><path d="M4 0 7.500 5.500 4 7.500.5 5.500zM4 8.500 7 6.800 4 11 1 6.800z" /></svg> : kind}
    </span>
  );
}

const ROWS: [string, string, string, string, string][] = [
  ["S", "•", "99,27", "0,045", "0,05%"], ["gold", "•", "4085", "−85,9", "−2,06%"], ["B", "BT", "9559", "1083", "1,15%"],
  ["pair-eu", "•", "1,162", "−0,00", "−0,10%"], ["500", "•", "6734", "−3,38", "−0,05%"], ["us", "•", "4,148", "0,033", "0,80%"],
  ["30", "•", "4714", "−309", "−0,65%"], ["eth", "ET", "3147", "37,8", "1,22%"], ["pair-gb", "•", "1,317", "−0,00", "−0,14%"],
  ["pair-jp", "•", "154,5", "0,010", "0,01%"], ["pair-gb", "•", "1,317", "−0,00", "−0,13%"], ["pair-eu", "•", "1,162", "−0,00", "−0,10%"],
  ["pair-eu", "•", "1,162", "−0,00", "−0,11%"], ["pair-jp", "•", "1,401", "−0,00", "−0,12%"], ["pair-jp", "•", "154,5", "−0,0", "−0,01%"],
  ["100", "D", "2456", "107,7", "0,44%"],
];

function Watchlist() {
  return (
    <section className="flex min-h-0 flex-1 flex-col overflow-hidden rounded-t bg-[#0f0f0f] text-[#d0d0d0]">
      <div className="flex h-[39px] shrink-0 items-center pl-3 pr-[12px]">
        <button className="flex w-[56px] items-center gap-[8px] text-[11px] font-bold">Wat...<ChevronDown size={11} /></button>
        <button aria-label="Ajouter" className="flex w-[24px] justify-center"><Plus size={18} strokeWidth={1.3} /></button>
        <button aria-label="Vue tableau" className="ml-[9px]"><TableAddIcon /></button>
        <button aria-label="Plus" className="ml-auto"><MoreIcon /></button>
      </div>
      <div className="min-h-0 flex-1 overflow-hidden">
        <table className="w-full table-fixed text-[11px]">
          <colgroup><col className="w-[31px]" /><col className="w-[15px]" /><col className="w-[26px]" /><col className="w-[30px]" /><col /></colgroup>
          <thead>
            <tr className="h-[22px] border-b border-[#333] text-[#9a9a9a]">
              <th colSpan={2} className="p-0 text-left font-normal">
                <span className="flex h-[20px] items-center">
                  <svg width="9" height="10" viewBox="0 0 9 10" fill="#4a4a4a"><path d="M0 0h9L6.500 5 9 10H0z" /></svg>
                  <span className="ml-[3px]">Syn</span>
                </span>
              </th>
              <th className="overflow-hidden whitespace-nowrap p-0 pl-[9px] text-left font-normal">Der</th>
              <th className="overflow-hidden whitespace-nowrap p-0 pl-[14px] text-left font-normal">Chg</th>
              <th className="p-0 pr-[13px] text-right font-normal">Chg%</th>
            </tr>
          </thead>
          <tbody>
            <tr className="h-[5px]"><td colSpan={5} className="p-0" /></tr>
            {ROWS.map(([kind, name, last, chg, pct], i) => {
              const tone = pct.startsWith("−") ? "text-[#d02349]" : "text-[#27ad7c]";
              return (
                <tr key={i} className={`h-6 ${i === 2 ? "rounded outline-2 -outline-offset-2 outline-[#9a9a9a]" : "border-b border-[#2a2a2a]"}`}>
                  <td className="p-0">
                    <span className="flex items-center">
                      <span className="w-[12px]">{i === 0 && <svg width="9" height="11" viewBox="0 0 9 11" fill="#f23a5c"><path d="M0 0h9L6.500 5.500 9 11H0z" /></svg>}</span>
                      <Coin kind={kind} />
                    </span>
                  </td>
                  <td className="overflow-hidden whitespace-nowrap p-0 pl-[1px]">
                    {name === "•" ? <span className="ml-[3px] block h-[5px] w-[5px] rounded-full bg-[#b0b0b0]" />
                      : name === "D" ? <span className="block pb-2 pl-[4px] text-[8px] font-bold leading-none text-[#e39122]">D</span>
                      : <span className="block w-[9px] overflow-hidden">{name}</span>}
                  </td>
                  <td className="overflow-hidden whitespace-nowrap p-0">{kind === "eth" ? <>314<span className="text-[#d02349]">7</span></> : last}</td>
                  <td className={`overflow-hidden whitespace-nowrap p-0 pl-[6px] ${tone}`}>{chg}</td>
                  <td className={`p-0 pr-[13px] text-right ${tone}`}>{pct}</td>
                </tr>
              );
            })}
          </tbody>
        </table>
      </div>
    </section>
  );
}

function Details() {
  return (
    <section className="mt-[3px] h-[139px] shrink-0 overflow-hidden rounded-t bg-[#0f0f0f] pl-3 pr-[12px] text-[#d0d0d0]">
      <div className="flex h-[38px] items-center">
        <span className="flex h-[20px] w-[20px] items-center justify-center rounded-full bg-[#ef8e26] text-[13px] font-bold text-white">B</span>
        <span className="ml-[6px] w-[32px] text-[11px] font-bold">B...</span>
        <button aria-label="Vue"><GridIcon size={19} /></button>
        <button aria-label="Note" className="ml-[13px]"><SquarePen size={17} strokeWidth={1.3} /></button>
        <button aria-label="Plus" className="ml-auto"><MoreIcon /></button>
      </div>
      <div className="flex h-[18px] items-center whitespace-nowrap text-[10px] font-semibold">
        <a href="#symbol" className="flex items-center gap-[3px]">Bitcoin / Dollar<SquareArrowOutUpRight size={10} strokeWidth={1.5} /></a>
        <span className="mx-[2px]">·</span>BITSTAMP
      </div>
      <div className="h-[17px] text-[10px] leading-[17px] text-[#8e8e8e]">Spot • Crypto</div>
      <div className="mt-[7px] flex h-[32px] items-baseline text-[24px] font-semibold leading-[32px]">
        95{"\u2009"}59<span className="text-[#2bb187]">2</span><span className="ml-[4px] text-[9px]">USD</span>
      </div>
      <div className="flex h-[16px] gap-[7px] text-[13px] font-semibold leading-[16px] text-[#27ad7c]"><span>+1{"\u2009"}083</span><span>+1,15%</span></div>
      <div className="flex h-[18px] items-center gap-[5px] pl-[4px] pt-[2px] text-[10px] text-[#27ad7c]">
        <span className="h-[6px] w-[6px] rounded-full bg-[#27ad7c]" />Marché ouvert
      </div>
    </section>
  );
}

function RightRail() {
  const slot = "flex h-[37px] w-full items-center justify-center";
  return (
    <aside className="ml-[2px] flex w-[35px] shrink-0 flex-col bg-[#0f0f0f] text-[#cfcfcf]">
      <button aria-label="Liste" className={slot}><span className="flex h-[30px] w-[30px] items-center justify-center rounded-md bg-[#3d3d3d]"><ListIcon /></span></button>
      <button aria-label="Alertes" className={slot}><AlarmClock size={21} strokeWidth={1.2} /></button>
      <button aria-label="Arborescence" className={slot}><Layers2 size={21} strokeWidth={1.2} /></button>
      <button aria-label="Discussions" className={slot}><MessagesSquare size={21} strokeWidth={1.2} /></button>
      <div className="mt-auto flex flex-col items-center">
        <button aria-label="Screeners" className={slot}><RadarIcon /></button>
        <button aria-label="Calendrier" className={slot}><CalIcon /></button>
        <button aria-label="Flux" className={slot}><Rss size={21} strokeWidth={1.2} /></button>
        <button aria-label="Notifications" className={slot}><Bell size={21} strokeWidth={1.2} /></button>
        <button aria-label="Produits" className={slot}>
          <span className="grid h-[28px] w-[28px] grid-cols-3 place-content-center gap-[3px] rounded-full bg-[#f3f3f3] px-[7px]">
            {Array.from({ length: 9 }, (_, i) => <span key={i} className="h-[3px] w-[3px] bg-[#222]" />)}
          </span>
        </button>
        <span className="my-1 h-px w-[28px] bg-[#3a3a3a]" />
        <button aria-label="Aide" className={slot}><CircleHelp size={24} strokeWidth={1.1} /></button>
      </div>
    </aside>
  );
}

/* ---------- system taskbar ---------- */

const TrayCell = ({ children }: Kids) => <span className="flex w-[19px] justify-center">{children}</span>;

function Taskbar() {
  const slot = "flex h-full w-[39px] shrink-0 items-center justify-center";
  return (
    <footer className="flex h-8 shrink-0 items-center overflow-hidden bg-[#1c1c1c] text-white">
      <button aria-label="Démarrer" className={slot}>
        <svg width="14" height="14" viewBox="0 0 14 14" fill="#fff"><path d="M0 2l6-.9v5.500H0zM6.700 1 14 0v6.600H6.700zM0 7.300h6v5.500L0 12zM6.700 7.300H14V14l-7.300-1z" /></svg>
      </button>
      <label className="flex h-full w-[230px] shrink-0 items-center bg-[#f2f2f2] pl-[10px] text-[#444]">
        <Search size={13} strokeWidth={1.6} className="-scale-x-100" />
        <input aria-label="Recherche" placeholder="Type here to search" className="ml-[9px] w-[130px] bg-transparent text-[11px] outline-none placeholder:text-[#4d4d4d]" />
        <svg width="50" height="24" viewBox="0 0 50 24" aria-hidden="true" className="ml-[9px]">
          <path d="M19 2c1.500 6 3 7.500 9 9-6 1.500-7.500 3-9 9-1.500-6-3-7.500-9-9 6-1.500 7.500-3 9-9z" fill="#f6b91f" />
          <path d="M37 9c.8 3 1.500 4 5 5-3.500 1-4.200 2-5 5-.8-3-1.500-4-5-5 3.500-1 4.200-2 5-5z" fill="#f3c04d" />
          <path d="M2 16l5 0 1 5-5 0z" fill="#3b9bd0" /><circle cx="32" cy="4" r="2" fill="#b0784c" /><circle cx="47" cy="19" r="1.500" fill="#93a77b" />
        </svg>
      </label>
      <button aria-label="Vue des tâches" className={slot}>
        <svg width="15" height="14" viewBox="0 0 15 14" fill="none" stroke="#eee" strokeWidth="1.3"><path d="M1 0v2h8V0M1 14v-2h8v2M1 4.500h8v5H1zM12.500 0v3M12.500 7v7M11 5h3" /></svg>
      </button>
      <button aria-label="Copilot" className={slot}>
        <svg width="20" height="18" viewBox="0 0 20 18"><path d="M7 1h6l2 5H8L5 14H3C0 14 1 10 3 5c1-3 2-4 4-4z" fill="#2aa6e8" /><path d="M3 6c-2 5-2 8 1 8h3L9 6z" fill="#e7c338" /><path d="M14 3h3c3 0 2 4 0 9-1 3-2 5-4 5H7c-2 0-2-3-2-3h4z" fill="#d9499f" /><path d="M10 1h4l2 4-4 3z" fill="#5661e6" /><path d="M9 14l3-6 4 1-2 7H8z" fill="#ef6d62" /></svg>
      </button>
      <button aria-label="Outlook" className={slot}>
        <svg width="20" height="19" viewBox="0 0 20 19"><path d="M2 6 11 0l8 6v9c0 2-1 3-3 3H5c-2 0-3-1-3-3z" fill="#2a7fe0" /><path d="M5 7l6-4 6 4-6 5z" fill="#9ad7ff" /><path d="M19 7v8c0 2-1 3-3 3H8z" fill="#5dc1f5" /><rect y="8" width="9" height="9" rx="2" fill="#1765c4" /><circle cx="4.500" cy="12.500" r="2.200" fill="none" stroke="#fff" strokeWidth="1.4" /></svg>
      </button>
      <button aria-label="Edge" className={slot}>
        <svg width="20" height="20" viewBox="0 0 20 20"><circle cx="10" cy="10" r="9.500" fill="#1a75c8" /><path d="M1 8C2 2 8-.5 13 1c5 1.500 7 6 6 9-1 2.500-5 3-6.500 1.500C14 9 11 6 7.500 6 4 6 2 8 1 10z" fill="#4ccf9b" /><path d="M1 8C2 2 8-.5 12 1 6 2 9 6 7 6 4 6 2 8 1 10z" fill="#33b6e6" /><path d="M8 8c-3 3-1 8 3 9 3 .5 5-.5 7-2-3 5-9 5.500-13 2.500-4-4-1-9 3-9.500z" fill="#0c4f95" /></svg>
      </button>
      <button aria-label="Explorateur" className={slot}>
        <svg width="18" height="16" viewBox="0 0 18 16"><path d="M0 1h7l1.500 2H18v12H0z" fill="#e5a925" /><path d="M0 4h18v11H0z" fill="#fad46b" /><path d="M4 15V9.500h10V15h-2.500v-3h-5v3z" fill="#4a9bd4" /></svg>
      </button>
      <button aria-label="Store" className={slot}>
        <svg width="19" height="20" viewBox="0 0 19 20"><path d="M5 4V1.500h9V4" fill="none" stroke="#37b4dc" strokeWidth="1.5" /><path d="M0 4h19v13c0 2-1 3-3 3H3c-2 0-3-1-3-3z" fill="#f3f3f3" /><path d="M5.500 7.500h3.500V11H5.500z" fill="#e6542c" /><path d="M10 7.500h3.500V11H10z" fill="#7ab929" /><path d="M5.500 12h3.500v3.500H5.500z" fill="#26a0da" /><path d="M10 12h3.500v3.500H10z" fill="#f7b919" /></svg>
      </button>
      <button aria-label="OBS" className="ml-[6px] flex h-full w-[31px] items-center justify-center border-b-2 border-[#77ade3]">
        <svg width="20" height="20" viewBox="0 0 20 20"><circle cx="9.500" cy="9.500" r="8.500" fill="#2a2a2e" stroke="#cfcfcf" strokeWidth="1.4" /><path d="M9 10C6 9 5 6 7 3M9 10c2-2.500 5-3 7-1M9 10c0 3-2 5-5 4.500" fill="none" stroke="#cfcfcf" strokeWidth="2" /><circle cx="14.500" cy="14.500" r="4.800" fill="#e0101e" /></svg>
      </button>
      <button aria-label="Chrome" className="ml-[5px] flex h-full w-[38px] items-center justify-center border-b-2 border-[#77ade3] bg-[#4b4b4b]">
        <svg width="20" height="20" viewBox="0 0 20 20"><circle cx="10" cy="10" r="9.500" fill="#f7c51e" /><path d="M1.800 5.300A9.500 9.500 0 0 1 18.200 5.300H10A4.700 4.700 0 0 0 5.700 8.200z" fill="#de3b2e" /><path d="M1.800 5.300 5.900 12.400A4.700 4.700 0 0 0 10 14.700L9 19.500A9.500 9.500 0 0 1 1.800 5.300z" fill="#2c9f4b" /><circle cx="10" cy="10" r="4.700" fill="#fff" /><circle cx="10" cy="10" r="3.700" fill="#3a7ce8" /></svg>
      </button>
      <div className="ml-auto flex items-center">
        <svg width="20" height="18" viewBox="0 0 20 18" aria-hidden="true"><circle cx="9" cy="9" r="8" fill="#f3a125" /><path d="M10 15a3 3 0 0 1 0-5 4 4 0 0 1 7 0 2.700 2.700 0 0 1 1 5z" fill="#a9c8ef" /></svg>
        <span className="ml-[5px] w-[30px] whitespace-nowrap text-[11px]">17°C</span>
        <span className="w-[84px] whitespace-nowrap text-[11px]">Très ensoleillé</span>
        <TrayCell><ChevronUp size={13} strokeWidth={1.8} /></TrayCell>
        <TrayCell>
          <svg width="11" height="15" viewBox="0 0 11 15" fill="none" stroke="#e8e8e8" strokeWidth="1.2"><path d="M.5 4h7v7h-7zM7.500 6l3-1.500v6l-3-1.500M2 1.500h5M2 13.500h5" /><circle cx="4" cy="7.500" r="1.500" /></svg>
        </TrayCell>
        <TrayCell><Cloud size={14} fill="#dcdcdc" className="text-[#dcdcdc]" /></TrayCell>
        <TrayCell><Mic size={14} fill="#fff" /></TrayCell>
        <TrayCell><Wifi size={14} className="-rotate-45" strokeWidth={1.6} /></TrayCell>
        <TrayCell><Volume2 size={14} strokeWidth={1.5} /></TrayCell>
        <div className="w-[54px] text-center text-[9px] leading-[15px]">12:56 PM<br />11/15/2025</div>
        <div className="relative ml-[5px] mr-[8px] h-[20px] w-[24px]">
          <svg width="18" height="18" viewBox="0 0 18 18" aria-hidden="true"><path d="M1 1h14v11H7l-3 3v-3H1z" fill="#fff" /><path d="M4 4h8M4 6.500h8M4 9h6" stroke="#222" /></svg>
          <span className="absolute left-[8px] top-[8px] flex h-[12px] w-[12px] items-center justify-center rounded-full border border-[#888] bg-[#333] text-[8px]">3</span>
        </div>
        <span className="mr-[3px] h-8 w-px bg-[#666]" />
      </div>
    </footer>
  );
}

export default function App() {
  return (
    <div className="flex h-screen flex-col overflow-hidden bg-[#2e2e2e] font-['Open_Sans','Noto_Sans',sans-serif]">
      <BrowserTabs />
      <AddressBar />
      <Header />
      <main className="mt-[3px] flex min-h-0 flex-1">
        <LeftRail />
        <div className="mr-[3px] flex min-w-0 flex-1 flex-col">
          <Chart />
          <BottomBars />
        </div>
        <div className="relative flex w-[162px] shrink-0 flex-col">
          <Watchlist />
          <Details />
          <button aria-label="Masquer le panneau" className="absolute -left-[3px] top-[518px] flex h-[20px] w-[8px] items-center justify-center rounded-r bg-[#0f0f0f] text-[9px] text-[#999]">›</button>
        </div>
        <RightRail />
      </main>
      <Taskbar />
    </div>
  );
}
